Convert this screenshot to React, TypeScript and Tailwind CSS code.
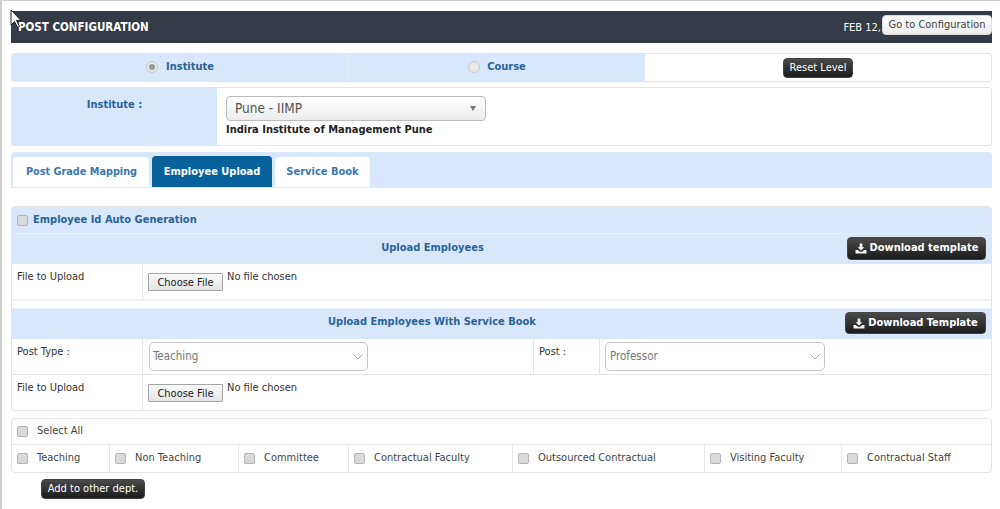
import React from "react";

const font = "font-['DejaVu_Sans_Condensed','DejaVu_Sans',sans-serif]";

function Check({ className = "" }: { className?: string }) {
  return <span className={`block w-[11px] h-[11px] shrink-0 rounded-[2px] border border-[#b4b4b4] bg-[#d9d9d9] ${className}`} />;
}

function Radio({ on }: { on?: boolean }) {
  return (
    <span className="flex w-[12px] h-[12px] items-center justify-center rounded-full border border-[#c8c8c8] bg-[#e8e8e8]">
      {on && <span className="block w-[6px] h-[6px] rounded-full bg-[#9a9a9a]" />}
    </span>
  );
}

function DarkButton({ children, className = "" }: { children: React.ReactNode; className?: string }) {
  return (
    <button className={`flex items-center justify-center rounded-[4px] border border-[#444] bg-gradient-to-b from-[#4a4a4a] to-[#1c1c1c] text-white ${className}`}>
      {children}
    </button>
  );
}

function DownloadIcon() {
  return (
    <svg width="12" height="11" viewBox="0 0 13 12" className="mr-[3px] shrink-0" fill="#f2f2f2">
      <path d="M5 0.5h3v4h2.2L6.5 8.2 2.8 4.5H5z" />
      <path d="M0.5 7.5h2.6l2.2 2h2.4l2.2-2h2.6v4h-12z" />
    </svg>
  );
}

function FileInput() {
  return (
    <div className="flex items-start">
      <button className="w-[75px] h-[18px] mt-[2px] pt-[1px] text-[11px] leading-[16px] text-[#222] border border-[#a6a6a6] rounded-[1px] bg-gradient-to-b from-[#fafafa] to-[#e4e4e4]">
        Choose File
      </button>
      <span className="ml-[4px] -mt-[2px] text-[11px] leading-[16px] text-[#333]">No file chosen</span>
    </div>
  );
}

function Select({ value, className = "" }: { value: string; className?: string }) {
  return (
    <div className={`flex h-[29px] items-center justify-between rounded-[5px] border border-[#c4c4c4] bg-white pr-[4px] text-[11.5px] text-[#777] ${className}`}>
      <span>{value}</span>
      <svg width="10" height="6" viewBox="0 0 10 6" fill="none" stroke="#aaa" strokeWidth="1">
        <path d="M0.5 0.5 5 5 9.5 0.5" />
      </svg>
    </div>
  );
}

const cats: [string, string][] = [
  ["Teaching", "w-[98px]"],
  ["Non Teaching", "w-[129px]"],
  ["Committee", "w-[110px]"],
  ["Contractual Faculty", "w-[164px]"],
  ["Outsourced Contractual", "w-[192px]"],
  ["Visiting Faculty", "w-[137px]"],
  ["Contractual Staff", "flex-1"],
];

export default function App() {
  return (
    <div className={`relative h-[509px] w-[1000px] overflow-hidden border-t border-l-2 border-[#cfcfcf] bg-white pl-[9px] pt-[10px] ${font}`}>
      <div className="w-[981px]">
        <div className="flex h-[32px] items-center justify-between bg-[#343a46] pl-[7px] text-white">
          <span className="mt-[2px] text-[11.5px] font-bold">POST CONFIGURATION</span>
          <div className="flex items-center">
            <span className="mr-[1px] mt-[2px] text-[11px] whitespace-nowrap">FEB 12,</span>
            <button className="-mt-[4px] h-[20px] w-[110px] rounded-[4px] border border-[#ddd] bg-gradient-to-b from-white to-[#ececec] text-[11px] text-[#444]">
              Go to Configuration
            </button>
          </div>
        </div>

        <div className="mt-[10px] flex h-[29px] overflow-hidden rounded-[3px] border border-[#e4e4e4]">
          <div className="flex w-[337px] items-center justify-center gap-[8px] border-r border-[#e6ecf5] bg-[#d8e7fc] pb-[1px] text-[11px] font-bold text-[#2a6496]">
            <Radio on /> Institute
          </div>
          <div className="flex w-[296px] items-center justify-center gap-[7px] bg-[#d8e7fc] pb-[1px] text-[11px] font-bold text-[#2a6496]">
            <Radio /> Course
          </div>
          <div className="flex flex-1 items-center justify-center">
            <DarkButton className="h-[20px] w-[70px] pt-[1px] text-[11px]">Reset Level</DarkButton>
          </div>
        </div>

        <div className="mt-[5px] flex h-[59px] overflow-hidden rounded-[3px] border border-[#e4e4e4]">
          <div className="w-[205px] bg-[#d8e7fc] pt-[9px] text-center text-[11px] font-bold text-[#2a6496]">Institute :</div>
          <div className="flex-1 pl-[9px] pt-[8px]">
            <div className="flex h-[25px] w-[260px] items-center justify-between rounded-[4px] border border-[#bcbcbc] bg-gradient-to-b from-white to-[#ececec] pl-[8px] pr-[9px] text-[13.5px] text-[#555]">
              <span>Pune - IIMP</span>
              <span className="block h-0 w-0 border-x-[3.5px] border-t-[5px] border-x-transparent border-t-[#777]" />
            </div>
            <div className="mt-[1px] text-[11px] font-bold leading-[16px] text-[#222]">Indira Institute of Management Pune</div>
          </div>
        </div>

        <div className="mt-[6px] flex h-[36px] items-end gap-[3px] rounded-t-[4px] border-b border-[#e8e8e8] bg-[#d8e7fc] pl-[2px]">
          <div className="flex h-[30px] w-[136px] items-center justify-center rounded-t-[4px] bg-white pl-[1px] text-[10.8px] font-bold text-[#3a78b0]">Post Grade Mapping</div>
          <div className="flex h-[31px] w-[120px] items-center justify-center rounded-t-[4px] bg-[#07629c] pt-[1px] text-[11px] font-bold text-white">Employee Upload</div>
          <div className="flex h-[30px] w-[95px] items-center justify-center rounded-t-[4px] bg-white text-[11px] font-bold text-[#3a78b0]">Service Book</div>
        </div>

        <div className="mt-[18px] overflow-hidden rounded-[4px] border border-[#e4e4e4]">
          <div className="flex h-[27px] items-center border-b border-[#eaf0f8] bg-[#d8e7fc] pl-[5px] text-[11px] font-bold text-[#2a6496]">
            <Check className="mr-[5px]" />
            Employee Id Auto Generation
          </div>
          <div className="relative flex h-[29px] items-center justify-center bg-[#d8e7fc] pb-[1px] pr-[138px] text-[11px] font-bold text-[#2a6496]">
            Upload Employees
            <DarkButton className="absolute right-[5px] top-[3px] h-[23px] w-[139px] text-[11px] font-bold">
              <DownloadIcon />
              Download template
            </DarkButton>
          </div>
          <div className="flex h-[36px] border-t border-[#e4e4e4] text-[11px] text-[#333]">
            <div className="w-[131px] border-r border-[#e4e4e4] pl-[5px] pt-[5px] leading-[16px]">File to Upload</div>
            <div className="flex-1 pl-[5px] pt-[7px]"><FileInput /></div>
          </div>
          <div className="h-[9px] border-t-2 border-[#efefef] bg-white" />
          <div className="relative flex h-[31px] items-center justify-center border-t border-[#eaf0f8] bg-[#d8e7fc] pb-[4px] pr-[139px] text-[11px] font-bold text-[#2a6496]">
            Upload Employees With Service Book
            <DarkButton className="absolute right-[5px] top-[3px] h-[22px] w-[141px] text-[11px] font-bold">
              <DownloadIcon />
              Download Template
            </DarkButton>
          </div>
          <div className="flex h-[36px] border-b border-[#e4e4e4] text-[11px] text-[#333]">
            <div className="w-[131px] border-r border-[#e4e4e4] pl-[5px] pt-[5px] leading-[16px]">Post Type :</div>
            <div className="w-[391px] border-r border-[#e4e4e4] pl-[6px] pt-[3px]"><Select value="Teaching" className="w-[219px] pl-[3px]" /></div>
            <div className="w-[66px] border-r border-[#e4e4e4] pl-[5px] pt-[5px] leading-[16px]">Post :</div>
            <div className="flex-1 pl-[5px] pt-[3px]"><Select value="Professor" className="w-[220px] pl-[4px]" /></div>
          </div>
          <div className="flex h-[35px] text-[11px] text-[#333]">
            <div className="w-[131px] border-r border-[#e4e4e4] pl-[5px] pt-[5px] leading-[16px]">File to Upload</div>
            <div className="flex-1 pl-[5px] pt-[7px]"><FileInput /></div>
          </div>
        </div>

        <div className="mt-[7px] overflow-hidden rounded-[4px] border border-[#e4e4e4] text-[11px] text-[#444]">
          <div className="flex h-[26px] items-center border-b border-[#e8e8e8] pl-[5px]">
            <Check className="mr-[9px]" />
            Select All
          </div>
          <div className="flex h-[27px]">
            {cats.map(([label, w], i) => (
              <div key={label} className={`flex items-center pl-[5px] ${w} ${i < 6 ? "border-r border-[#e8e8e8]" : ""}`}>
                <Check className="mr-[9px]" />
                <span className="whitespace-nowrap">{label}</span>
              </div>
            ))}
          </div>
        </div>

        <DarkButton className="ml-[30px] mt-[6px] h-[20px] w-[104px] text-[11px]">Add to other dept.</DarkButton>
      </div>

      <svg className="absolute left-[8px] top-[8px]" width="14" height="20" viewBox="0 0 14 20">
        <path d="M1 1v15l3.5-3.5 3 6 2-1-3-6H11z" fill="#fff" stroke="#222" strokeWidth="1" />
      </svg>
    </div>
  );
}
